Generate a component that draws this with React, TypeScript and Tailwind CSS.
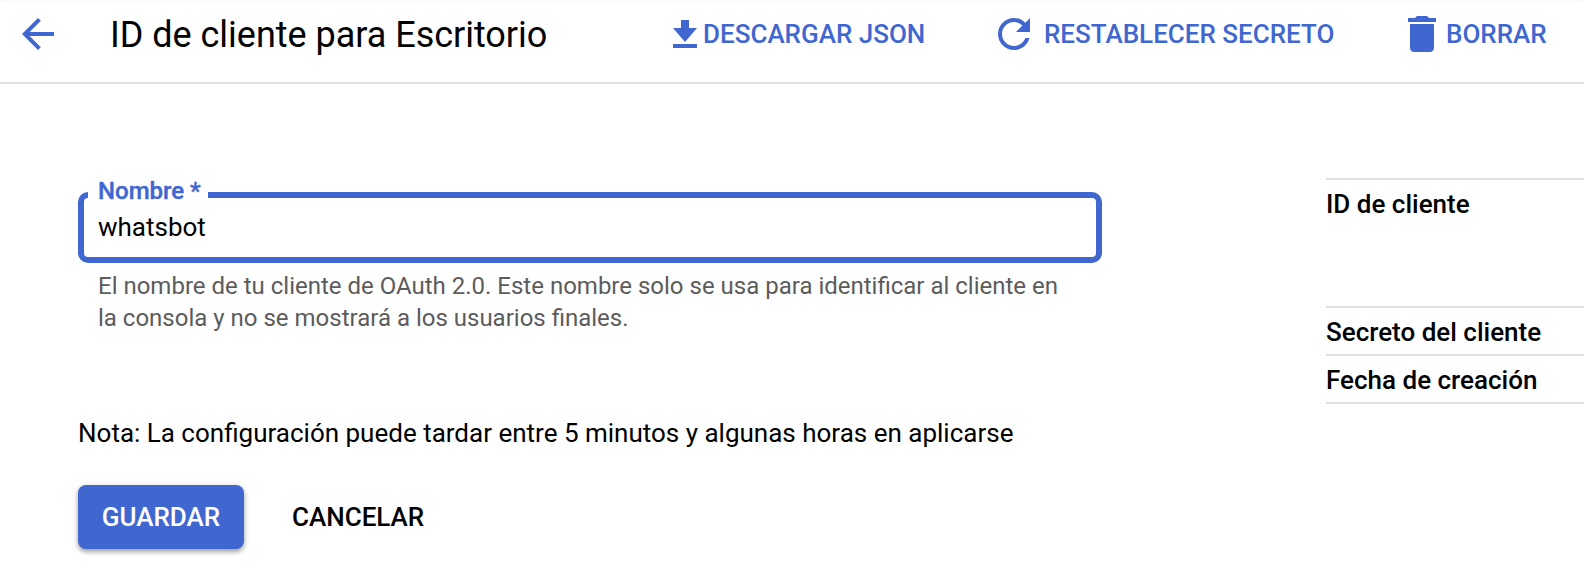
import type { ReactNode } from "react";

function HeaderAction({ icon, label, className }: { icon: ReactNode; label: string; className: string }) {
  return (
    <button className={`flex items-center whitespace-nowrap text-[26px] leading-8 font-medium text-[#4067d0] ${className}`}>
      {icon}
      <span>{label}</span>
    </button>
  );
}

function BackIcon() {
  return (
    <svg className="size-8 shrink-0" viewBox="4 4 16 16" fill="currentColor">
      <path d="M20 11H7.83l5.59-5.59L12 4l-8 8 8 8 1.41-1.41L7.83 13H20v-2z" />
    </svg>
  );
}

function DownloadIcon() {
  return (
    <svg className="h-7 w-6 shrink-0" viewBox="0 0 24 28" fill="currentColor">
      <path d="M8 0h8v8h8L12 22 0 8h8zM0 24h24v4H0z" />
    </svg>
  );
}

function RefreshIcon() {
  return (
    <svg className="size-8 shrink-0" viewBox="4 4 16 16" fill="currentColor">
      <path d="M17.65 6.35C16.2 4.9 14.21 4 12 4c-4.42 0-7.99 3.58-7.99 8s3.57 8 7.99 8c3.73 0 6.84-2.55 7.73-6h-2.08c-.82 2.33-3.04 4-5.65 4-3.31 0-6-2.69-6-6s2.69-6 6-6c1.66 0 3.14.69 4.22 1.78L13 11h7V4l-2.35 2.35z" />
    </svg>
  );
}

function TrashIcon() {
  return (
    <svg className="h-9 w-7 shrink-0" viewBox="5 3 14 18" fill="currentColor">
      <path d="M6 19c0 1.1.9 2 2 2h8c1.1 0 2-.9 2-2V7H6v12zM19 4h-3.5l-1-1h-5l-1 1H5v2h14V4z" />
    </svg>
  );
}

export default function App() {
  return (
    <div className="h-[588px] w-[1584px] overflow-hidden bg-white font-['Roboto',sans-serif] text-[26px] leading-8 text-black">
      <header className="h-[84px] border-b-2 border-[#e0e0e0] shadow-[inset_0_1px_1px_#fafafa]">
        <div className="flex h-[68px] items-center">
          <button className="ml-[22px] text-[#4067d0]" aria-label="Atrás">
            <BackIcon />
          </button>
          <h1 className="ml-14 w-[563px] pt-0.5 text-[36px] leading-[42px] tracking-[-0.02px] whitespace-nowrap">
            ID de cliente para Escritorio
          </h1>
          <HeaderAction className="w-[325px] gap-1.5" icon={<DownloadIcon />} label="DESCARGAR JSON" />
          <HeaderAction className="w-[410px] gap-3.5" icon={<RefreshIcon />} label="RESTABLECER SECRETO" />
          <HeaderAction className="gap-2.5" icon={<TrashIcon />} label="BORRAR" />
        </div>
      </header>

      <main className="flex pl-[78px]">
        <form className="w-[1024px] pt-[108px]">
          <div className="relative h-[71px] rounded-[10px] border-6 border-[#4067d0] pt-[13px] pl-3.5">
            <label className="absolute -top-[23px] left-1 w-[120px] bg-white pl-2.5 text-2xl leading-8 font-medium whitespace-nowrap text-[#4067d0] [-webkit-text-stroke:0.4px]">
              Nombre *
            </label>
            <div>whatsbot</div>
          </div>
          <p className="mt-[7px] pl-5 text-2xl leading-8 text-[#5c5c5c]">
            El nombre de tu cliente de OAuth 2.0. Este nombre solo se usa para identificar al cliente en
            <br />
            la consola y no se mostrará a los usuarios finales.
          </p>
          <p className="mt-[83px]">Nota: La configuración puede tardar entre 5 minutos y algunas horas en aplicarse</p>
          <div className="mt-9 flex items-center font-medium">
            <button
              type="button"
              className="h-16 w-[166px] rounded-lg bg-[#4067d0] text-white shadow-[0_3px_4px_rgba(0,0,0,0.3),0_1px_8px_rgba(0,0,0,0.12)]"
            >
              GUARDAR
            </button>
            <button type="button" className="ml-12">
              CANCELAR
            </button>
          </div>
        </form>

        <dl className="mt-[94px] ml-[224px] flex-1 self-start border-t-2 border-[#e0e0e0] font-medium">
          <dt className="h-32 border-b-2 border-[#e0e0e0] pt-2">ID de cliente</dt>
          <dt className="h-12 border-b-2 border-[#e0e0e0] pt-2">Secreto del cliente</dt>
          <dt className="h-12 border-b-2 border-[#e0e0e0] pt-2">Fecha de creación</dt>
        </dl>
      </main>
    </div>
  );
}
